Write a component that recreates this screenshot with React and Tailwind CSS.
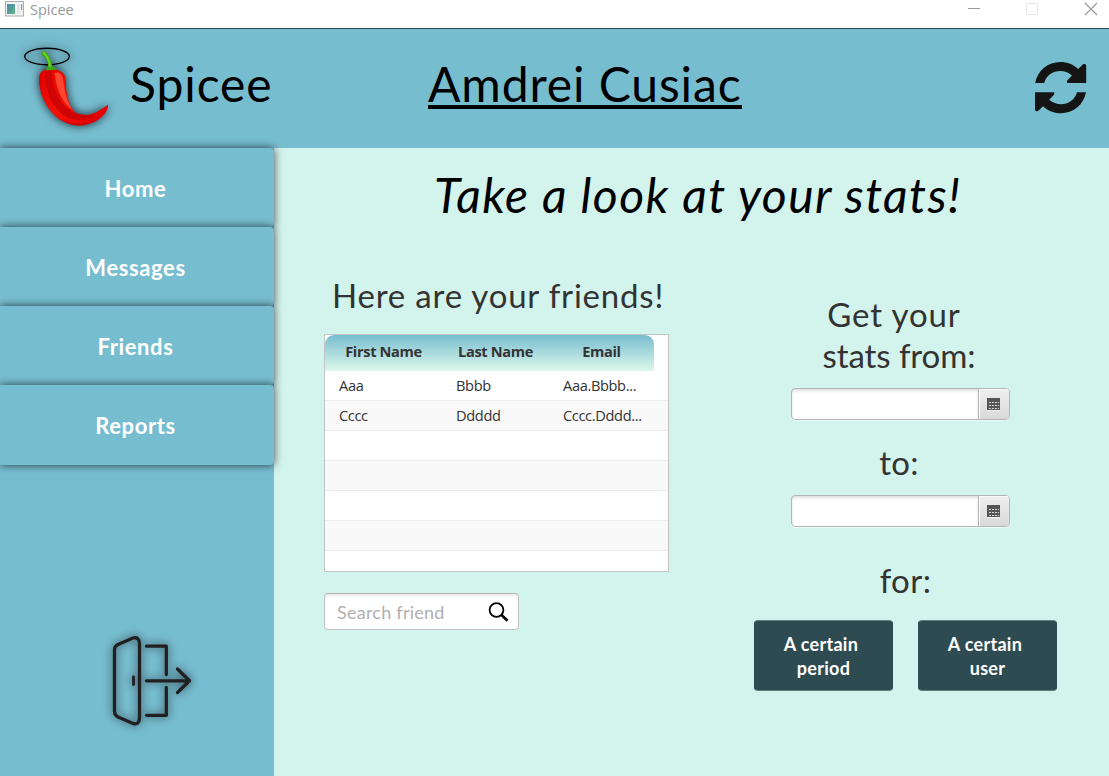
import React from "react";

const NAV = ["Home", "Messages", "Friends", "Reports"];

const ROWS = [
  ["Aaa", "Bbbb", "Aaa.Bbbb..."],
  ["Cccc", "Ddddd", "Cccc.Dddd..."],
  ["", "", ""],
  ["", "", ""],
  ["", "", ""],
  ["", "", ""],
  ["", "", ""],
];

function AppIcon() {
  return (
    <svg width="19" height="16" viewBox="0 0 19 16">
      <defs>
        <linearGradient id="app" x1="0" y1="0" x2="1" y2="1">
          <stop offset="0" stopColor="#4a86b0" />
          <stop offset="1" stopColor="#5fb586" />
        </linearGradient>
      </defs>
      <rect x="0.5" y="0.5" width="18" height="14.500" fill="#f4f5f6" stroke="#a9adb0" />
      <rect x="2" y="3" width="8" height="10" fill="url(#app)" />
      <rect x="12" y="3" width="3" height="10" fill="#e3e5e6" />
      <rect x="16" y="3" width="1.2" height="6" fill="#6fa99a" />
    </svg>
  );
}

function Chili() {
  return (
    <svg width="100" height="96" viewBox="16 38 100 96" className="overflow-visible drop-shadow-[0_0_5px_rgba(0,0,0,0.8)]">
      <defs>
        <linearGradient id="pepper" x1="0" y1="0" x2="1" y2="0.6">
          <stop offset="0" stopColor="#e00000" />
          <stop offset="0.55" stopColor="#f41208" />
          <stop offset="1" stopColor="#e80000" />
        </linearGradient>
      </defs>
      <ellipse cx="47" cy="56.5" rx="22.3" ry="8.2" fill="none" stroke="#000" strokeWidth="1.4" />
      <path d="M39.2 80C38.6 72 43 69 50 69.2C58 68.8 65 72 65.6 79C66 96 69 110 79 115C90 117 99 111 107.6 105C108.8 106 107.5 110 105 113.5C99 121 89 125.6 78 125.4C58 124.5 40.5 106 39.2 80Z" fill="url(#pepper)" />
      <path d="M41 75C38 92 46 112 62 120C76 126 92 123 102 116C92 124.5 84 125.4 78 125.4C58 124.5 40.5 106 39.2 80Z" fill="#d20000" />
      <path d="M45 72C45 92 53 110 68 118C80 122 92 119 99 115C84 116 72 114 65 106C56 96 52 84 51 71Z" fill="#cf0505" />
      <path d="M54.5 73C60 71 63 75 63.5 81C64.5 92 67 102 73 110C64 105 56.5 92 54.5 73Z" fill="#ff4630" />
      <path d="M45.5 70C46.5 67.5 48 67 48.3 65.5C47.8 60.5 45.5 57 42 55.2C40.3 53.6 41.8 50.8 44.3 51C48.5 53.5 51.5 60 52.2 66.2C54 67.2 56.5 68.5 57.5 70C54 69.4 50 70.6 45.5 70Z" fill="#3da80f" />
      <path d="M43 52.3C47 55.5 49.5 61 50 67" fill="none" stroke="#69d42a" strokeWidth="2" />
    </svg>
  );
}

const ARROW =
  "M1035.2 83C1037.5 70.5 1048 62 1060.5 62C1067 62 1073.5 64.5 1078.2 69L1082.8 64.4C1084 63.4 1086.2 64 1086.2 65.8V83H1067V80.8L1072 75.5C1062.5 67.3 1047.5 70.8 1044.2 83Z";

function RefreshIcon() {
  return (
    <svg width="52" height="52" viewBox="1035 62 52 52" fill="#141414">
      <path d={ARROW} />
      <path d={ARROW} transform="rotate(180 1060.6 87.6)" />
    </svg>
  );
}

function ExitIcon() {
  return (
    <svg width="84" height="96" viewBox="110 633 84 96" fill="none" stroke="#221f20" strokeWidth="3.3" strokeLinecap="round" strokeLinejoin="round" className="overflow-visible drop-shadow-[0_0_5px_rgba(0,0,0,0.7)]">
      <path d="M114.5 649.5Q114.5 646 118 644.4L133 638Q139.5 636.5 139.5 644V717Q139.5 725.5 133 723.4L118 717Q114.5 715 114.5 711.5Z" />
      <path d="M133.5 677V684.5" strokeWidth="2.8" />
      <path d="M146.5 646.2H166.3V674.5M146.5 715.3H166.3V687.5" />
      <path d="M146.5 680.8H189.5M177.5 669L189.5 680.8L177.5 692.5" />
    </svg>
  );
}

function DateField() {
  return (
    <div className="flex h-8 w-[219px] overflow-hidden rounded-[4px] border border-[#b5b5b5] bg-white shadow-[0_1px_0_rgba(255,255,255,0.6)]">
      <div className="flex-1 shadow-[inset_0_2px_3px_rgba(0,0,0,0.13)]" />
      <div className="flex w-[31px] items-center justify-center border-l border-[#b5b5b5] bg-linear-to-b from-[#efefef] to-[#d9d9d9] shadow-[inset_1px_1px_0_#fafafa]">
        <svg width="13" height="13" viewBox="0 0 13 13">
          <rect width="13" height="12" fill="#555" />
          <path d="M2 4.5H12M2 7.500H12M2 10.5H12" stroke="#e6e6e6" strokeWidth="1" strokeDasharray="2 1" opacity="0.9" />
          <path d="M0 12.5H13" stroke="#f5f5f5" />
        </svg>
      </div>
    </div>
  );
}

function StatButton({ top, bottom }) {
  return (
    <button className="h-[71px] w-[139px] rounded-[4px] border border-[#5f7f83] border-x-[#2f4b52] bg-[#2f4b52] text-center text-[18px] leading-6 font-bold tracking-[0.3px] text-white">
      <span className="mr-[5px]">{top}</span>
      <br />
      {bottom}
    </button>
  );
}

export default function App() {
  return (
    <div className="flex h-[776px] w-[1109px] flex-col overflow-hidden bg-[#d3f3ed] font-['Lato',sans-serif]">
      <div className="flex h-[29px] shrink-0 items-start justify-between border-b border-[#2f4a60] bg-white">
        <div className="flex items-start gap-[6px] pt-px pl-[5px]">
          <AppIcon />
          <span className="font-['Open_Sans',sans-serif] text-[14.500px] leading-[18px] text-[#999]">Spicee</span>
        </div>
        <svg width="142" height="20" viewBox="967 0 142 20" fill="none">
          <path d="M968 8.5H980" stroke="#999" />
          <rect x="1026.5" y="3.500" width="11" height="11" rx="1" stroke="#e8e8e8" />
          <path d="M1085 3L1097 15M1097 3L1085 15" stroke="#999" strokeWidth="1.2" />
        </svg>
      </div>

      <header className="flex h-[119px] shrink-0 bg-[#77bdd0]">
        <div className="w-[130px] shrink-0 pt-[9px] pl-4">
          <Chili />
        </div>
        <h1 className="w-[298px] shrink-0 pt-[25px] text-[48px] leading-[60px] tracking-[0.9px] whitespace-nowrap text-black">Spicee</h1>
        <h2 className="w-[607px] shrink-0 pt-[25px] text-[48px] leading-[60px] tracking-[0.9px] whitespace-nowrap text-black">
          <span className="inline-block h-[55px] border-b-4 border-black">Amdrei Cusiac</span>
        </h2>
        <div className="pt-[33px]">
          <RefreshIcon />
        </div>
      </header>

      <div className="flex min-h-0 flex-1">
        <aside className="relative z-10 flex w-[274px] shrink-0 flex-col bg-[#77bdd0]">
          <nav className="flex flex-col">
            {NAV.map((label) => (
              <button
                key={label}
                className="relative h-[79px] rounded-r-[4px] bg-[#77bdd0] pt-[2px] pr-[3px] text-[22px] leading-[26px] font-bold tracking-[0.6px] text-white shadow-[0_0_9px_rgba(0,0,0,0.7)] last:h-20"
              >
                {label}
              </button>
            ))}
          </nav>
          <div className="pt-[168px] pl-[110px]">
            <ExitIcon />
          </div>
        </aside>

        <main className="flex flex-1 flex-col">
          <h2 className="h-[101px] pt-[17px] pl-[160px] text-[48px] leading-[60px] tracking-[1.4px] whitespace-nowrap text-black italic">Take a look at your stats!</h2>
          <div className="flex flex-1">
            <section className="w-[480px] shrink-0 pl-[50px] text-[#333]">
              <h3 className="h-[85px] pt-[25px] pl-[8px] text-[33px] leading-[42px] tracking-[0.8px] whitespace-nowrap">Here are your friends!</h3>
              <div className="h-[238px] w-[345px] overflow-hidden border border-[#c4c4c4] bg-white font-['Open_Sans',sans-serif] text-[14.600px] tracking-[-0.35px]">
                <div className="grid h-9 w-[329px] grid-cols-[117px_107px_105px] rounded-t-[9px] bg-linear-to-b from-[#77bdd0] to-[#dcf8ea] pt-[5px] text-center leading-[22px] font-bold whitespace-nowrap">
                  <span>First Name</span>
                  <span>Last Name</span>
                  <span>Email</span>
                </div>
                {ROWS.map((row, i) => (
                  <div key={i} className="grid h-[30px] grid-cols-[117px_107px_119px] border-b border-[#ededed] pl-[14px] leading-[29px] whitespace-nowrap odd:bg-[#f9f9f9] even:bg-white">
                    {row.map((cell, j) => (
                      <span key={j}>{cell}</span>
                    ))}
                  </div>
                ))}
              </div>
              <div className="mt-[21px] flex h-[37px] w-[195px] items-center justify-between rounded-[4px] border border-[#c3c3c3] border-t-[#b5b5b5] bg-white pr-[9px] pl-3 shadow-[inset_0_2px_2px_rgba(0,0,0,0.08)]">
                <span className="text-[18px] leading-6 tracking-[0.25px] text-[#b0b0b0]">Search friend</span>
                <svg width="21" height="21" viewBox="0 0 21 21" fill="none" stroke="#000">
                  <circle cx="8.500" cy="9" r="6.900" strokeWidth="1.8" />
                  <path d="M13.300 13.800L19.500 19.800" strokeWidth="2.600" />
                </svg>
              </div>
            </section>

            <section className="flex w-[303px] flex-col items-center text-[#333]">
              <p className="pt-[45px] pr-[13px] text-center text-[33px] leading-[41px]">
                <span className="mr-[10px] tracking-[0.9px]">Get your</span>
                <br />
                <span className="tracking-[-0.1px]">stats from:</span>
              </p>
              <div className="mt-[12px] pr-[11px]">
                <DateField />
              </div>
              <p className="mt-[22px] h-[53px] pr-[13px] text-[33px] leading-[41px] tracking-[0.2px]">to:</p>
              <div className="pr-[11px]">
                <DateField />
              </div>
              <p className="mt-[33px] h-[60px] text-[33px] leading-[41px] tracking-[0.4px]">for:</p>
              <div className="flex gap-[25px]">
                <StatButton top="A certain" bottom="period" />
                <StatButton top="A certain" bottom="user" />
              </div>
            </section>
          </div>
        </main>
      </div>
    </div>
  );
}
